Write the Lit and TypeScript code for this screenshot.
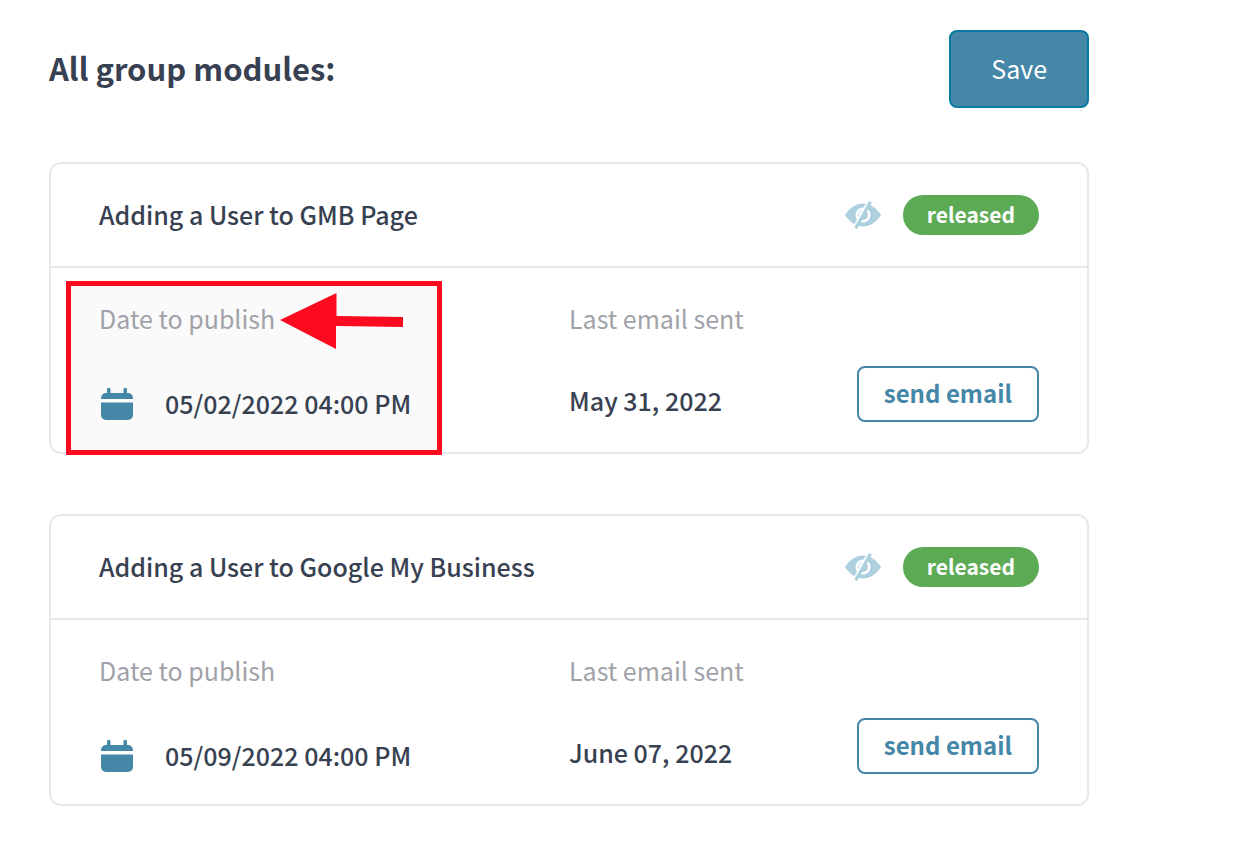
import { LitElement, html, css, svg, nothing } from "lit";
import { customElement, property } from "lit/decorators.js";

interface Module {
  id: string;
  title: string;
  publish: string;
  lastEmail: string;
  highlighted: boolean;
}

const MODULES: Module[] = [
  {
    id: "gmb-page",
    title: "Adding a User to GMB Page",
    publish: "05/02/2022 04:00 PM",
    lastEmail: "May 31, 2022",
    highlighted: true,
  },
  {
    id: "google-my-business",
    title: "Adding a User to Google My Business",
    publish: "05/09/2022 04:00 PM",
    lastEmail: "June 07, 2022",
    highlighted: false,
  },
];

const eyeShapes = svg`
  <path fill="#aed0df" d="M0 14C5 6.500 11 2.500 18 2.500s13 4 18 11.500c-5 7.500-11 11.500-18 11.500S5 21.500 0 14z" />
  <circle cx="18" cy="14" r="6.200" fill="#aed0df" stroke="#fff" stroke-width="2.600" />
  <path d="M14.300 14a3.800 3.800 0 0 1 3.700-3.800" fill="none" stroke="#fff" stroke-width="1.300" />
  <path d="M23.500 0 8 27.500" stroke="#fff" stroke-width="2" />
  <path d="M25.600 0.800 10.600 27.200" stroke="#aed0df" stroke-width="3.200" />
`;

@customElement("module-card")
export class ModuleCard extends LitElement {
  @property({ attribute: false }) module!: Module;

  static styles = css`
    :host {
      display: block;
      border: 2px solid #e5e9ee;
      border-radius: 12px;
    }
    .head {
      display: flex;
      align-items: center;
      justify-content: space-between;
      padding: 31px 48px;
      border-bottom: 2px solid #e5e9ee;
    }
    .title {
      margin: 0;
      padding-bottom: 2px;
      font-size: 25px;
      line-height: 38px;
      font-weight: 500;
    }
    .status {
      display: flex;
      align-items: center;
      gap: 22px;
    }
    .icon-button {
      display: block;
      border: 0;
      padding: 0;
      background: none;
      cursor: pointer;
    }
    .icon {
      display: block;
    }
    .badge {
      padding: 0 24px 2px;
      border-radius: 20px;
      background: #5daa55;
      color: #fff;
      font-size: 21px;
      line-height: 38px;
      font-weight: 700;
    }
    .body {
      display: grid;
      grid-template-columns: repeat(2, minmax(0, 1fr));
      padding: 32px 48px 28px;
    }
    .cell {
      position: relative;
    }
    .label {
      display: block;
      color: #9fa2a8;
      font-size: 25px;
      line-height: 36px;
    }
    .date-row {
      display: flex;
      align-items: center;
      gap: 32px;
      margin-top: 48px;
      padding-left: 2px;
    }
    .date {
      flex: 1;
      min-width: 0;
      height: 40px;
      box-sizing: border-box;
      border: 0;
      padding: 0 0 2px;
      background: none;
      color: inherit;
      font: inherit;
      font-size: 25px;
      line-height: 38px;
      font-weight: 500;
    }
    .label,
    .date-row {
      position: relative;
    }
    .email-row {
      display: flex;
      align-items: flex-end;
      justify-content: space-between;
      margin-top: 30px;
      white-space: nowrap;
    }
    .sent {
      font-size: 25px;
      line-height: 44px;
      font-weight: 500;
    }
    .send {
      border: 2px solid #4587a7;
      border-radius: 8px;
      padding: 0 25px 2px;
      background: #fff;
      color: #4587a7;
      font: inherit;
      font-size: 24px;
      line-height: 50px;
      font-weight: 700;
      cursor: pointer;
    }
    .highlight {
      position: absolute;
      top: -19px;
      left: -33px;
      box-sizing: border-box;
      width: 376px;
      height: 174px;
      border: 5px solid #fb0a20;
      background: #fafafa;
    }
    .arrow {
      position: absolute;
      top: 7px;
      left: 209px;
    }
  `;

  render() {
    const m = this.module;
    return html`
      <header class="head">
        <h2 class="title">${m.title}</h2>
        <div class="status">
          <button class="icon-button" type="button" aria-label="Toggle visibility">
            <svg class="icon" width="36" height="28" viewBox="0 0 36 28">${eyeShapes}</svg>
          </button>
          <span class="badge">released</span>
        </div>
      </header>
      <div class="body">
        <div class="cell">
          ${m.highlighted
            ? html`<div class="highlight">
                <svg class="arrow" width="124" height="58" viewBox="0 0 124 58">
                  <path fill="#fb0a20" d="M0 27 56.500 0v23L123 24v10L56 33v23z" />
                </svg>
              </div>`
            : nothing}
          <label class="label" for=${m.id}>Date to publish</label>
          <div class="date-row">
            <button class="icon-button" type="button" aria-label="Open calendar">
              <svg class="icon" width="32" height="32" viewBox="0 0 32 32">
                <path
                  fill="#4587a7"
                  d="M6 1.500a1.500 1.500 0 0 1 3.500 0V5h13V1.500a1.500 1.500 0 0 1 3.500 0V5h1a5 5 0 0 1 5 5v1H0v-1a5 5 0 0 1 5-5h1zM0 14.500h32V27a5 5 0 0 1-5 5H5a5 5 0 0 1-5-5z"
                />
              </svg>
            </button>
            <input class="date" id=${m.id} type="text" .value=${m.publish} />
          </div>
        </div>
        <div class="cell">
          <span class="label">Last email sent</span>
          <div class="email-row">
            <span class="sent">${m.lastEmail}</span>
            <button class="send" type="button">send email</button>
          </div>
        </div>
      </div>
    `;
  }
}

@customElement("app-root")
export class AppRoot extends LitElement {
  static styles = css`
    :host {
      display: block;
      background: #fff;
      color: #374151;
      font-family: "Noto Sans CJK SC", "Noto Sans", sans-serif;
    }
    .page {
      display: flex;
      flex-direction: column;
      padding: 30px 155px 48px 49px;
    }
    .top {
      display: flex;
      align-items: center;
      justify-content: space-between;
      margin-bottom: 54px;
    }
    .heading {
      margin: 0;
      padding-bottom: 2px;
      font-size: 31px;
      line-height: 46px;
      font-weight: 700;
    }
    .save {
      border: 2px solid #077ba3;
      border-radius: 8px;
      padding: 0 40px 2px;
      background: #4587a7;
      color: #fff;
      font: inherit;
      font-size: 25px;
      line-height: 72px;
      cursor: pointer;
    }
    .cards {
      display: grid;
      gap: 60px;
    }
  `;

  render() {
    return html`
      <main class="page">
        <div class="top">
          <h1 class="heading">All group modules:</h1>
          <button class="save" type="button">Save</button>
        </div>
        <div class="cards">
          ${MODULES.map((m) => html`<module-card .module=${m}></module-card>`)}
        </div>
      </main>
    `;
  }
}
